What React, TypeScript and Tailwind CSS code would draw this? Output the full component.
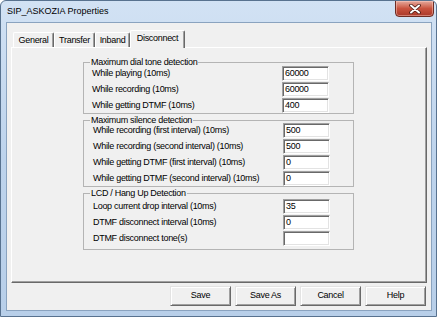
import React from 'react';

const font = { fontFamily: '"Liberation Sans", Arial, sans-serif' };

type Row = { label: string; value: string };

const groups: { title: string; pt: string; pb: string; pl: string; pr: string; mt: string; rows: Row[] }[] = [
  {
    title: 'Maximum dial tone detection',
    pt: 'pt-[3px]',
    pb: 'pb-0',
    pl: 'pl-[8px]',
    pr: 'pr-[24px]',
    mt: 'mt-[14px]',
    rows: [
      { label: 'While playing (10ms)', value: '60000' },
      { label: 'While recording (10ms)', value: '60000' },
      { label: 'While getting DTMF (10ms)', value: '400' },
    ],
  },
  {
    title: 'Maximum silence detection',
    pt: 'pt-[2px]',
    pb: 'pb-0',
    pl: 'pl-[9px]',
    pr: 'pr-[23px]',
    mt: 'mt-[6px]',
    rows: [
      { label: 'While recording (first interval) (10ms)', value: '500' },
      { label: 'While recording (second interval) (10ms)', value: '500' },
      { label: 'While getting DTMF (first interval) (10ms)', value: '0' },
      { label: 'While getting DTMF (second interval) (10ms)', value: '0' },
    ],
  },
  {
    title: 'LCD / Hang Up Detection',
    pt: 'pt-[5px]',
    pb: 'pb-[3px]',
    pl: 'pl-[9px]',
    pr: 'pr-[23px]',
    mt: 'mt-[6px]',
    rows: [
      { label: 'Loop current drop interval (10ms)', value: '35' },
      { label: 'DTMF disconnect interval (10ms)', value: '0' },
      { label: 'DTMF disconnect tone(s)', value: '' },
    ],
  },
];

const tabs = [
  { label: 'General', w: 'w-[41px]' },
  { label: 'Transfer', w: 'w-[41px]' },
  { label: 'Inband', w: 'w-[35px]' },
];

function CloseButton() {
  return (
    <div className="-mt-[1px] mr-[2px] w-[39px] h-[17px] rounded-b-[4px] border border-[#6e2d24] bg-gradient-to-b from-[#e4a99d] via-[#c9533f] to-[#a9382a] flex items-center justify-center shadow-[inset_0_0_0_1px_rgba(255,210,200,0.45)]">
      <svg width="12" height="10" viewBox="0 0 12 10">
        <path d="M2 1.5 L10 8.5 M10 1.5 L2 8.5" stroke="#4a1a14" strokeWidth="3.6" strokeLinecap="round" />
        <path d="M2 1.5 L10 8.5 M10 1.5 L2 8.5" stroke="#ffffff" strokeWidth="2" strokeLinecap="round" />
      </svg>
    </div>
  );
}

function Button({ label }: { label: string }) {
  return (
    <div className="w-[61px] h-[20px] flex items-center justify-center bg-[#f0f0f0] border border-t-[#e3e3e3] border-l-[#e3e3e3] border-b-[#696969] border-r-[#696969] shadow-[inset_1px_1px_0_#ffffff,inset_-1px_-1px_0_#a0a0a0] text-[9px] tracking-[-0.3px] text-black">
      {label}
    </div>
  );
}

export default function App() {
  return (
    <div
      style={font}
      className="w-[437px] h-[317px] flex flex-col rounded-t-[6px] border border-[#58728f] bg-gradient-to-b from-[#d2e2f4] via-[#bdd3ec] to-[#b8cfe9] overflow-hidden"
    >
      {/* title bar */}
      <div className="h-[21px] flex items-start justify-between">
        <span className="pl-[6px] pt-[5px] text-[9px] leading-[11px] text-black">SIP_ASKOZIA Properties</span>
        <CloseButton />
      </div>

      {/* client area */}
      <div className="ml-[5px] mr-[4px] mb-[5px] flex-1 flex flex-col bg-[#f0f0f0] border border-[#8aa3bf] text-black text-[9px] tracking-[-0.3px]">
        {/* tabs */}
        <div className="pt-[7px] pl-[6px] flex items-end h-[24px]">
          {tabs.map((t) => (
            <div
              key={t.label}
              className={`${t.w} h-[15px] flex items-center justify-center border-l border-t border-r border-l-white border-t-white border-r-[#696969] shadow-[inset_-1px_0_0_#a0a0a0] rounded-t-[2px] leading-[11px]`}
            >
              {t.label}
            </div>
          ))}
          <div className="relative z-10 -mb-[1px] w-[55px] h-[18px] pb-[2px] flex items-center justify-center bg-[#f0f0f0] border-l border-t border-r border-l-white border-t-white border-r-[#696969] shadow-[inset_-1px_0_0_#a0a0a0] rounded-t-[2px] leading-[11px]">
            Disconnect
          </div>
        </div>

        {/* tab page */}
        <div className="ml-[4px] mr-[4px] h-[236px] flex flex-col border border-t-white border-l-white border-b-[#696969] border-r-[#696969] shadow-[inset_-1px_-1px_0_#a0a0a0]">
          {groups.map((g) => (
            <div
              key={g.title}
              className={`relative ${g.mt} ml-[71px] w-[271px] border border-[#b4b4b4] ${g.pt} ${g.pb} ${g.pl} ${g.pr} flex flex-col gap-[1px]`}
            >
              <span className="absolute -top-[6px] left-[6px] px-[1px] bg-[#f0f0f0] leading-[11px]">{g.title}</span>
              {g.rows.map((r) => (
                <div key={r.label} className="flex items-center justify-between h-[15px]">
                  <span className="leading-[11px] whitespace-nowrap">{r.label}</span>
                  <div className="w-[47px] h-[15px] bg-white border border-t-[#a0a0a0] border-l-[#a0a0a0] border-b-white border-r-white shadow-[inset_1px_1px_0_#696969,inset_-1px_-1px_0_#e3e3e3] pl-[2px] flex items-center leading-[11px]">
                    {r.value}
                  </div>
                </div>
              ))}
            </div>
          ))}
        </div>

        {/* buttons */}
        <div className="mt-[3px] pr-[5px] flex justify-end gap-[4px]">
          <Button label="Save" />
          <Button label="Save As" />
          <Button label="Cancel" />
          <Button label="Help" />
        </div>
      </div>
    </div>
  );
}
